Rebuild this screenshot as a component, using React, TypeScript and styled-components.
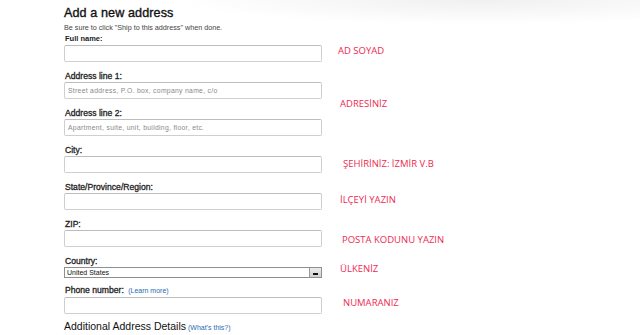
import React from "react";
import styled, { createGlobalStyle } from "styled-components";

const Global = createGlobalStyle`
  html, body { margin: 0; padding: 0; background: #fff; }
  body {
    width: 640px; height: 335px; overflow: hidden;
    font-family: "Liberation Sans", Arial, sans-serif;
  }
`;

const Page = styled.div`
  position: relative;
  width: 640px;
  height: 335px;
  box-sizing: border-box;
  padding: 4px 0 0 64px;
  background:
    radial-gradient(ellipse 300px 24px at 480px 0px, #f0f0f0 0%, rgba(255,255,255,0) 100%),
    #fff;
  overflow: hidden;
`;

const Title = styled.h1`
  margin: 0;
  font-size: 12.6px;
  line-height: 18px;
  font-weight: 400;
  color: #111;
  -webkit-text-stroke: 0.35px #111;
  letter-spacing: 0.1px;
`;

const Hint = styled.div`
  margin-top: 1px;
  font-size: 7.2px;
  line-height: 10px;
  color: #444;
`;

const Form = styled.div`
  display: flex;
  flex-direction: column;
  width: 258px;
  gap: 8px;
`;

const Field = styled.div<{ $tight?: boolean }>`
  display: flex;
  flex-direction: column;
  margin-top: ${(p) => (p.$tight ? "-2px" : "0")};
`;

const Label = styled.div<{ $small?: boolean }>`
  font-size: ${(p) => (p.$small ? "7.5px" : "8.6px")};
  line-height: 12px;
  font-weight: ${(p) => (p.$small ? 700 : 400)};
  -webkit-text-stroke: ${(p) => (p.$small ? "0" : "0.3px #222")};
  color: #222;
  padding-left: 1px;
`;

const Link = styled.span<{ $gap?: number }>`
  font-weight: 400;
  color: #2a6bb3;
  font-size: 7px;
  -webkit-text-stroke: 0;
  margin-left: ${(p) => p.$gap ?? 4}px;
`;

const TextBox = styled.div`
  box-sizing: border-box;
  height: 17px;
  border: 1px solid #cfcfcf;
  border-top-color: #bdbdbd;
  border-radius: 2px;
  background: #fff;
  padding: 0 3px;
  font-size: 6.8px;
  letter-spacing: 0.3px;
  line-height: 15px;
  color: #8a8a8a;
`;

const SelectBox = styled.div`
  box-sizing: border-box;
  height: 11px;
  border: 1px solid #8f8f8f;
  background: #fff;
  display: flex;
  align-items: center;
  justify-content: space-between;
  font-size: 7px;
  color: #111;
  padding-left: 2px;
`;

const SelectButton = styled.div`
  width: 12px;
  height: 9px;
  box-sizing: border-box;
  background: linear-gradient(#ececec, #d0d0d0);
  border-left: 1px solid #9a9a9a;
  display: flex;
  align-items: flex-end;
  justify-content: center;
  padding-bottom: 2px;
  &::after {
    content: "";
    width: 5px;
    height: 2px;
    background: #111;
  }
`;

const Additional = styled.div`
  margin-top: 6px;
  font-size: 10.5px;
  line-height: 12px;
  color: #111;
`;

const Note = styled.div<{ $x: number; $y: number }>`
  position: absolute;
  left: ${(p) => p.$x}px;
  top: ${(p) => p.$y}px;
  font-family: "Open Sans", "Noto Sans", sans-serif;
  font-size: 9.5px;
  line-height: 12px;
  color: #ee2a4f;
  white-space: nowrap;
`;

const fields: { label: string; placeholder?: string; small?: boolean }[] = [
  { label: "Full name:", small: true },
  { label: "Address line 1:", placeholder: "Street address, P.O. box, company name, c/o" },
  { label: "Address line 2:", placeholder: "Apartment, suite, unit, building, floor, etc." },
  { label: "City:" },
  { label: "State/Province/Region:" },
  { label: "ZIP:" },
];

const notes = [
  { text: "AD SOYAD", x: 338, y: 45 },
  { text: "ADRESİNİZ", x: 340, y: 98 },
  { text: "ŞEHİRİNİZ: İZMİR V.B", x: 343, y: 158 },
  { text: "İLÇEYİ YAZIN", x: 340, y: 194 },
  { text: "POSTA KODUNU YAZIN", x: 342, y: 234 },
  { text: "ÜLKENİZ", x: 340, y: 263 },
  { text: "NUMARANIZ", x: 343, y: 297 },
];

export default function App() {
  return (
    <>
      <Global />
      <Page>
        <Title>Add a new address</Title>
        <Hint>Be sure to click "Ship to this address" when done.</Hint>
        <Form>
          {fields.map((f) => (
            <Field key={f.label}>
              <Label $small={f.small}>{f.label}</Label>
              <TextBox>{f.placeholder ?? ""}</TextBox>
            </Field>
          ))}
          <Field>
            <Label>Country:</Label>
            <SelectBox>
              United States
              <SelectButton />
            </SelectBox>
          </Field>
          <Field $tight>
            <Label>
              Phone number: <Link $gap={2}>(Learn more)</Link>
            </Label>
            <TextBox />
          </Field>
        </Form>
        <Additional>
          Additional Address Details<Link $gap={2}>(What's this?)</Link>
        </Additional>
        {notes.map((n) => (
          <Note key={n.text} $x={n.x} $y={n.y}>
            {n.text}
          </Note>
        ))}
      </Page>
    </>
  );
}
